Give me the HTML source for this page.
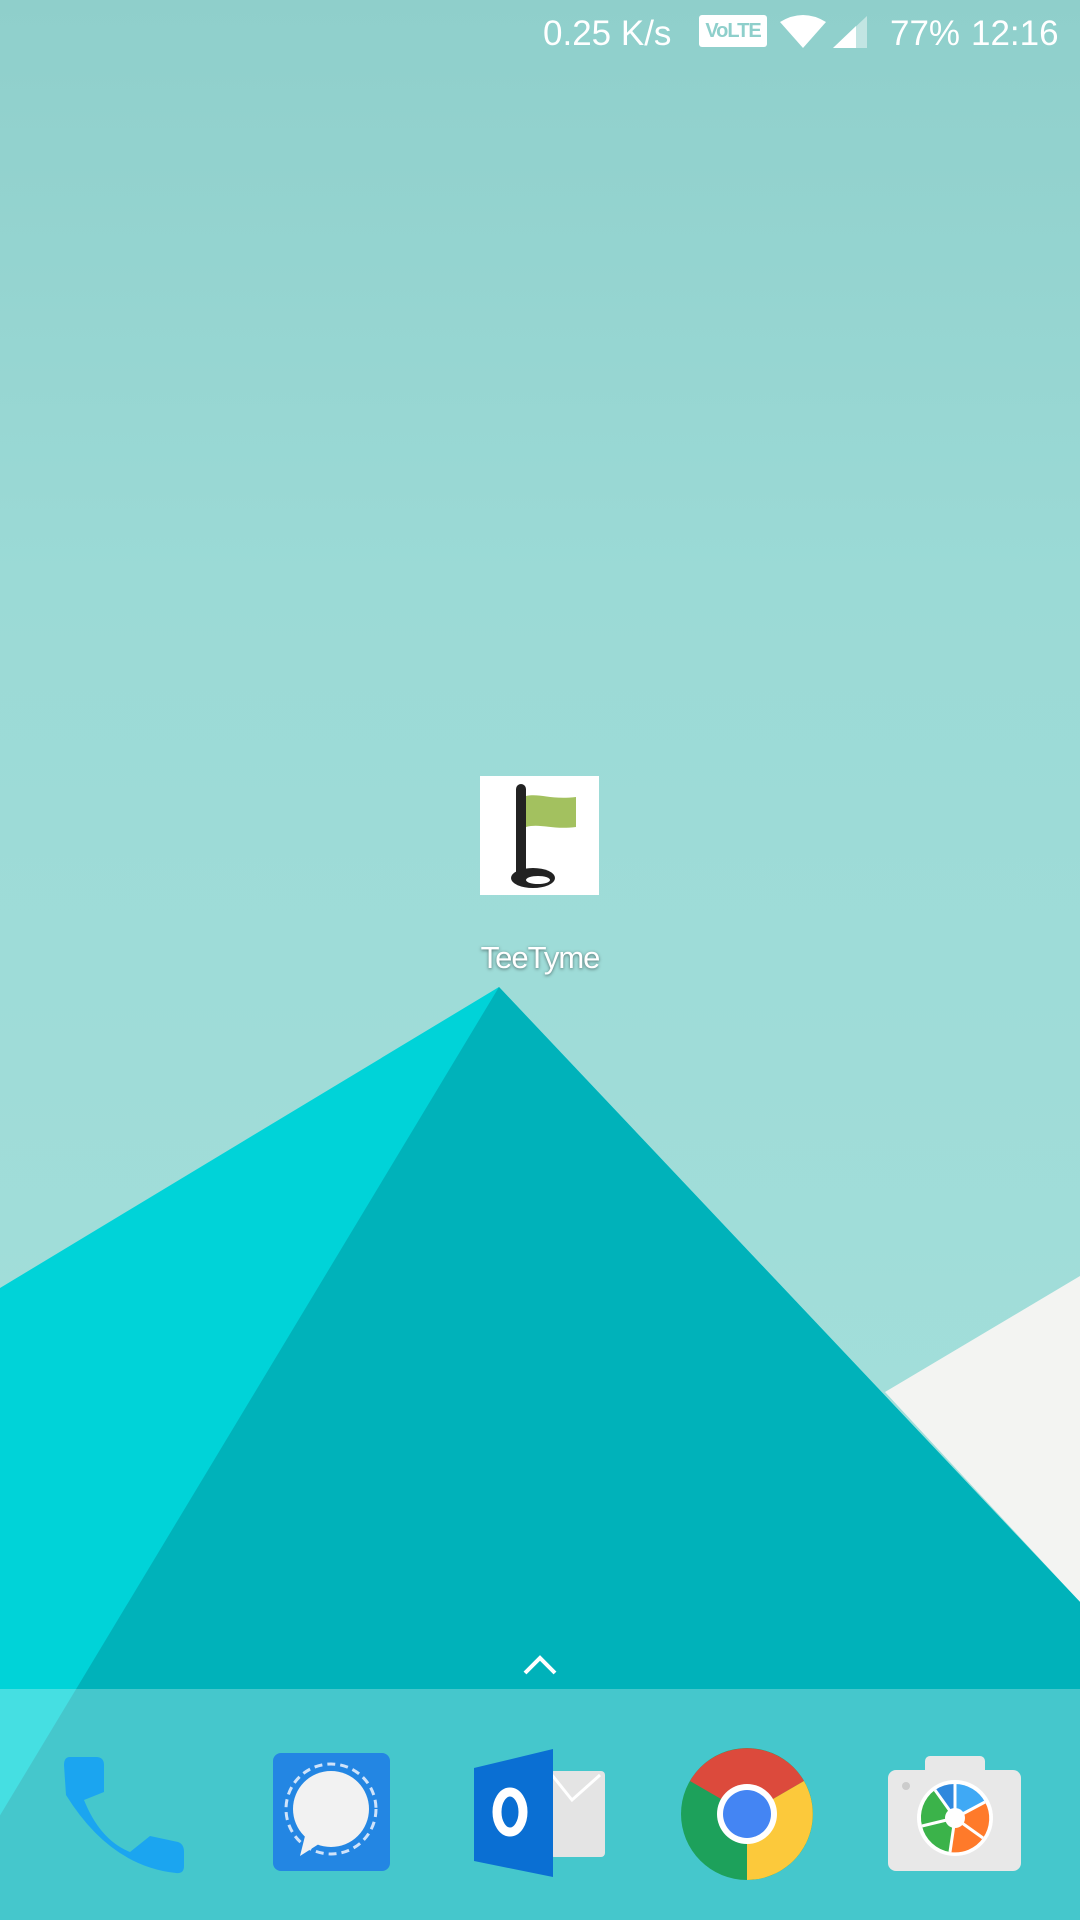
<!DOCTYPE html>
<html><head><meta charset="utf-8"><style>
html,body{margin:0;padding:0;width:1080px;height:1920px;overflow:hidden;font-family:"Liberation Sans",sans-serif}
.abs{position:absolute}
.st{position:absolute;top:12px;font-size:35px;color:#fff;line-height:44px;white-space:nowrap}
</style></head><body>
<svg class="abs" style="left:0;top:0" width="1080" height="1920" viewBox="0 0 1080 1920">
<defs><linearGradient id="bg" x1="0" y1="0" x2="0" y2="1"><stop offset="0" stop-color="#8fcfcb"/><stop offset="0.3" stop-color="#9bdad6"/><stop offset="1" stop-color="#a6e0dc"/></linearGradient></defs>
<rect width="1080" height="1920" fill="url(#bg)"/>
<polygon points="1080,1276 885,1392 1080,1602" fill="#f3f4f2"/>
<polygon points="499,987 0,1288 0,1920 1080,1920 1080,1602" fill="#00d3d8"/>
<polygon points="499,987 -63,1920 1080,1920 1080,1602" fill="#00b2ba"/>
<rect x="0" y="1689" width="1080" height="231" fill="#ffffff" opacity="0.27"/>
<polyline points="525,1673 540,1658 555,1673" fill="none" stroke="#fff" stroke-width="4"/>
</svg>

<div class="st" style="left:543px">0.25 K/s</div>
<div class="abs" style="left:699px;top:15px;width:68px;height:32px;background:#fff;border-radius:3px;color:#8ecfcb;font-size:20px;font-weight:bold;line-height:32px;text-align:center;letter-spacing:-1px">VoLTE</div>
<svg class="abs" style="left:780px;top:14px" width="90" height="36" viewBox="0 0 90 36">
<path d="M0 8 Q23 -6 46 8 L23 34 Z" fill="#fff"/>
<polygon points="53,34 87,34 87,2" fill="#fff" opacity="0.45"/>
<polygon points="53,34 76,34 76,12" fill="#fff"/>
</svg>
<div class="st" style="left:890px">77%</div>
<div class="st" style="left:971px">12:16</div>

<div class="abs" style="left:480px;top:776px;width:119px;height:119px;background:#fff"></div>
<svg class="abs" style="left:480px;top:776px" width="119" height="119" viewBox="0 0 119 119">
<path d="M46 20 C60 17 70 24 96 21 L96 51 C72 54 60 47 46 51 Z" fill="#a3c15f"/>
<rect x="36" y="8" width="10" height="96" rx="5" fill="#222"/>
<ellipse cx="53" cy="102" rx="22" ry="10" fill="#222"/>
<ellipse cx="58" cy="104" rx="12" ry="4" fill="#fff"/>
</svg>
<div class="abs" style="left:440px;width:200px;top:940px;text-align:center;color:#fff;font-size:31px;letter-spacing:-1px;text-shadow:0 1px 3px rgba(0,0,0,0.5)">TeeTyme</div>

<svg class="abs" style="left:0;top:1740px" width="1080" height="150" viewBox="0 1740 1080 150">
<path d="M70 1757 L96 1757 Q104 1757 104 1765 L104 1792 L84 1800 Q100 1840 130 1852 L150 1836 L178 1842 Q184 1844 184 1852 L184 1866 Q184 1874 176 1873 Q110 1866 66 1795 L64 1765 Q64 1757 70 1757Z" fill="#1ba5f0"/>
<rect x="273" y="1753" width="117" height="118" rx="8" fill="#2386e3"/>
<circle cx="331" cy="1809" r="45" fill="none" stroke="#cfe3fa" stroke-width="3" stroke-dasharray="8 5"/>
<ellipse cx="331" cy="1809" rx="38" ry="38" fill="#f2f2f2"/>
<polygon points="306,1832 300,1856 322,1842" fill="#f2f2f2"/>
<rect x="550" y="1771" width="55" height="86" rx="4" fill="#e4e4e4"/>
<polyline points="552,1775 572,1800 600,1775" fill="none" stroke="#fff" stroke-width="3"/>
<polygon points="474,1768 553,1749 553,1877 474,1861" fill="#0a6fd3"/>
<ellipse cx="510" cy="1812" rx="13" ry="20" fill="none" stroke="#fff" stroke-width="9"/>
<circle cx="747" cy="1814" r="66" fill="#1da15b"/>
<path d="M747 1814 L690 1781 A66 66 0 0 1 804 1781 Z" fill="#dc4a3c"/>
<path d="M747 1814 L804 1781 A66 66 0 0 1 747 1880 Z" fill="#fcc93b"/>
<circle cx="747" cy="1814" r="30" fill="#fff"/>
<circle cx="747" cy="1814" r="24" fill="#4485f3"/>
<rect x="888" y="1770" width="133" height="101" rx="8" fill="#e8e8e8"/>
<rect x="925" y="1756" width="60" height="20" rx="5" fill="#e8e8e8"/>
<circle cx="906" cy="1786" r="4" fill="#ccc"/>
<circle cx="955" cy="1818" r="38" fill="#fff"/>
<path d="M955 1818 L955 1784 A34 34 0 0 1 985 1802Z" fill="#3fa9f5"/>
<path d="M955 1818 L985 1802 A34 34 0 0 1 983 1838Z" fill="#ff7a2a"/>
<path d="M955 1818 L983 1838 A34 34 0 0 1 950 1852Z" fill="#ff7a2a"/>
<path d="M955 1818 L950 1852 A34 34 0 0 1 922 1826Z" fill="#3bb34a"/>
<path d="M955 1818 L922 1826 A34 34 0 0 1 935 1790Z" fill="#3bb34a"/>
<path d="M955 1818 L935 1790 A34 34 0 0 1 955 1784Z" fill="#2f88dd"/>
<g stroke="#fff" stroke-width="3"><line x1="955" y1="1818" x2="955" y2="1784"/><line x1="955" y1="1818" x2="985" y2="1802"/><line x1="955" y1="1818" x2="983" y2="1838"/><line x1="955" y1="1818" x2="950" y2="1852"/><line x1="955" y1="1818" x2="922" y2="1826"/><line x1="955" y1="1818" x2="935" y2="1790"/></g>
<circle cx="955" cy="1818" r="10" fill="#fff"/>
</svg>
</body></html>
